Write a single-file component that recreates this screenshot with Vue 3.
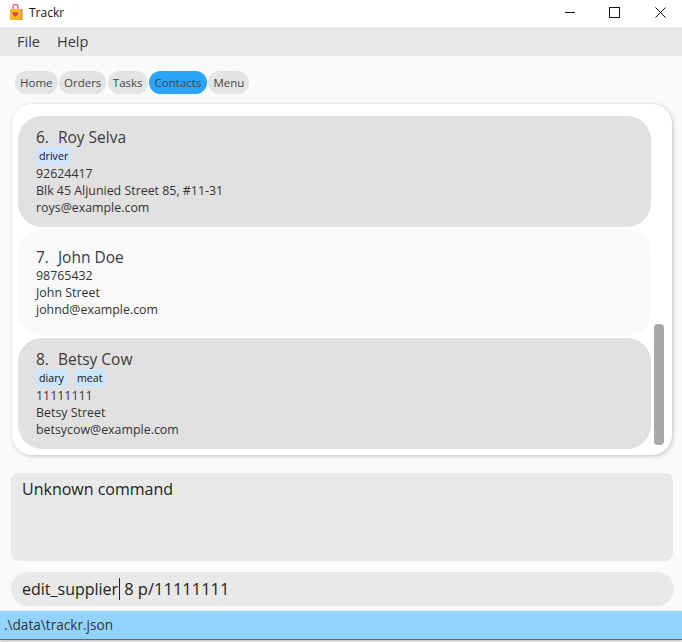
<script setup>
const tabs = ['Home', 'Orders', 'Tasks', 'Contacts', 'Menu']
const contacts = [
  { n: 6, name: 'Roy Selva', tags: ['driver'], phone: '92624417', address: 'Blk 45 Aljunied Street 85, #11-31', email: 'roys@example.com', alt: false },
  { n: 7, name: 'John Doe', tags: [], phone: '98765432', address: 'John Street', email: 'johnd@example.com', alt: true },
  { n: 8, name: 'Betsy Cow', tags: ['diary', 'meat'], phone: '11111111', address: 'Betsy Street', email: 'betsycow@example.com', alt: false },
]
</script>

<template>
  <div class="window">
    <header class="titlebar">
      <svg class="logo" width="16" height="16" viewBox="0 0 16 16">
        <path d="M5 5V2.8a2.5 2.5 0 0 1 5 0V5" fill="none" stroke="#e0506a" stroke-width="1.2" />
        <rect x="2" y="5" width="10.5" height="11" fill="#f9bb1c" />
        <rect x="12.5" y="5" width="2" height="11" fill="#d8901a" />
        <path d="M7.3 13 4.6 10.2a1.6 1.6 0 0 1 2.7-1.6 1.6 1.6 0 0 1 2.7 1.6z" fill="#e8365d" />
      </svg>
      <span class="app-name">Trackr</span>
      <div class="controls">
        <svg width="46" height="22" viewBox="0 0 46 22"><path d="M21 11.5h10" stroke="#111" fill="none" /></svg>
        <svg width="46" height="22" viewBox="0 0 46 22"><rect x="19.5" y="6.5" width="10" height="10" stroke="#111" fill="none" /></svg>
        <svg width="46" height="22" viewBox="0 0 46 22"><path d="M19.5 6.5l10 10M29.5 6.5l-10 10" stroke="#111" fill="none" /></svg>
      </div>
    </header>
    <nav class="menubar"><span>File</span><span>Help</span></nav>
    <main class="content">
      <div class="tabs">
        <span v-for="t in tabs" :key="t" class="tab" :class="{ active: t === 'Contacts' }">{{ t }}</span>
      </div>
      <section class="panel">
        <article v-for="c in contacts" :key="c.n" class="card" :class="{ alt: c.alt }">
          <div class="name"><span class="num">{{ c.n }}.</span>{{ c.name }}</div>
          <div v-if="c.tags.length" class="tags"><span v-for="g in c.tags" :key="g" class="tag">{{ g }}</span></div>
          <div class="line">{{ c.phone }}</div>
          <div class="line">{{ c.address }}</div>
          <div class="line">{{ c.email }}</div>
        </article>
        <div class="thumb"></div>
      </section>
      <div class="feedback">Unknown command</div>
      <div class="command"><span class="typed">edit_supplier</span><span class="caret"></span><span class="args">8 p/11111111</span></div>
    </main>
    <footer class="status">.\data\trackr.json</footer>
  </div>
</template>

<style>
html, body { margin: 0; background: #fff; }
</style>

<style scoped>
.window { width: 682px; height: 642px; display: flex; flex-direction: column; overflow: hidden; font-family: "Open Sans", "Noto Sans", sans-serif; color: #333; background: #fff; }
.titlebar { height: 27px; flex: none; display: flex; align-items: center; background: #fff; padding-left: 8px; box-sizing: border-box; }
.logo { margin-bottom: 3px; }
.app-name { font-size: 12px; margin-left: 5px; margin-bottom: 3px; color: #111; }
.controls { margin-left: auto; display: flex; align-items: center; margin-bottom: 3px; }
.menubar { height: 29px; flex: none; background: #e9e9e9; display: flex; align-items: center; gap: 17px; padding-left: 17px; font-size: 14.5px; color: #3a3a3a; }
.content { height: 555px; flex: none; background: #fafafa; box-sizing: border-box; padding: 15px 8px 0 11px; display: flex; flex-direction: column; }
.tabs { display: flex; gap: 1.5px; padding-left: 4px; height: 23px; margin-bottom: 10px; }
.tab { background: #e4e4e4; border-radius: 12px; font-size: 11.5px; line-height: 24px; height: 23px; padding: 0 5px; color: #444; }
.tab.active { background: #2aa5fb; padding: 0 5.5px; }
.panel { position: relative; margin-left: 1px; width: 660px; height: 351px; box-sizing: border-box; background: #fff; border-radius: 20px; box-shadow: 1px 1px 4px rgba(0, 0, 0, .22); padding: 12px 21px 0 6px; display: flex; flex-direction: column; gap: 2px; overflow: hidden; }
.card { height: 111px; flex: none; box-sizing: border-box; background: #e1e1e1; border-radius: 24px; padding-left: 18px; padding-bottom: 2px; display: flex; flex-direction: column; justify-content: center; }
.card.alt { height: 107px; background: #f9f9f9; }
.name { font-size: 15.5px; line-height: 22px; color: #3a3a3a; display: flex; margin-top: 1px; margin-bottom: -1px; }
.num { margin-right: 9px; }
.tags { display: flex; gap: 7px; height: 18px; align-items: center; margin-bottom: 0; }
.tag { background: #cde4fd; border-radius: 3px; font-size: 10.7px; line-height: 18px; padding: 0 3px; color: #111; }
.line { font-size: 12.4px; line-height: 17px; color: #333; }
.thumb { position: absolute; left: 642px; top: 220px; width: 10px; height: 121px; border-radius: 4px; background: #a9a9a9; }
.feedback { margin-top: 18px; height: 88px; width: 662px; flex: none; box-sizing: border-box; background: #e9e9e9; border-radius: 8px; padding: 4px 11px; font-size: 16px; line-height: 24px; color: #222; }
.command { margin-top: 11px; height: 34px; width: 663px; flex: none; box-sizing: border-box; background: #e9e9e9; border-radius: 17px; padding: 0 11px; font-size: 16px; line-height: 34px; color: #222; display: flex; }
.caret { width: 1px; height: 22px; margin-top: 6px; margin-left: 1px; background: #222; }
.args { margin-left: 4px; font-size: 16.5px; }
.status { margin-top: 0; height: 28px; flex: none; background: #92d3ff; border-bottom: 1px solid #666; box-shadow: 0 1px 3px rgba(0,0,0,.3); padding-left: 4px; font-size: 13.6px; line-height: 28px; color: #333; }
</style>
